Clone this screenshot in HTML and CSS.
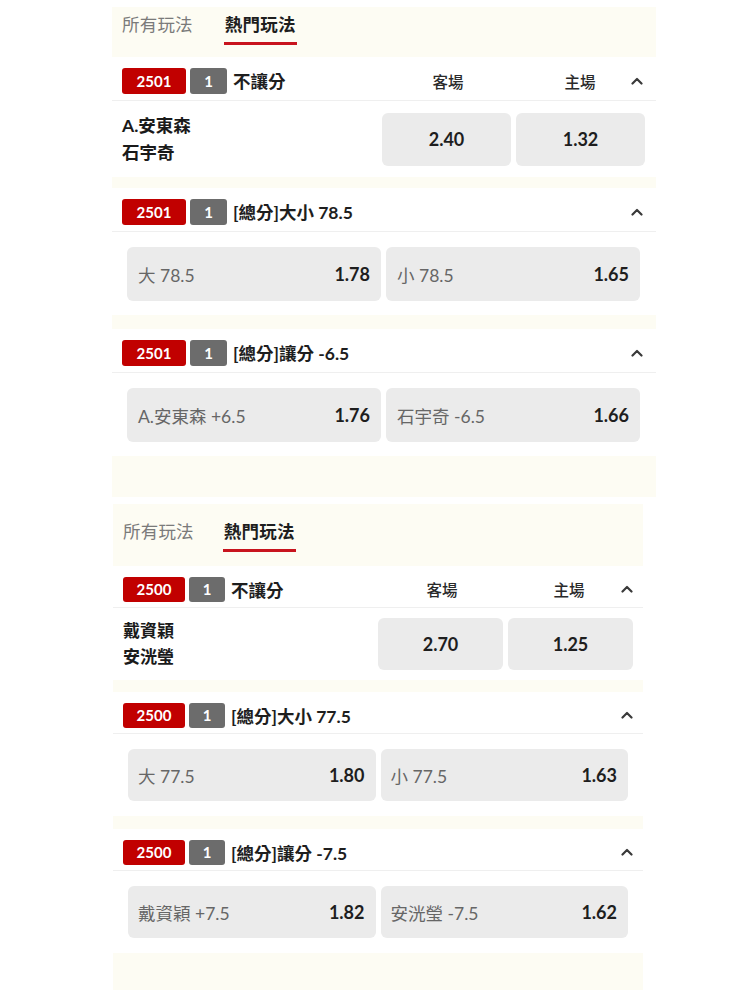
FILE: index.html
```html
<!DOCTYPE html>
<html lang="zh-Hant">
<head>
<meta charset="utf-8">
<title>熱門玩法</title>
<link rel="stylesheet" href="styles.css">
</head>
<body>
<div class="panel pa">
  <div class="tabs"><span class="tab">所有玩法</span><span class="tab active">熱門玩法</span></div>

  <section class="market">
    <div class="mhead">
      <span class="bid">2501</span><span class="bnum">1</span><span class="mtitle">不讓分</span>
      <span class="col c1">客場</span><span class="col c2">主場</span>
      <svg class="caret" viewBox="0 0 12 8" width="12" height="8"><polyline points="1.5,6.5 6,2 10.5,6.5"/></svg>
    </div>
    <div class="mbody teams-body">
      <div class="teams"><div>A.安東森</div><div>石宇奇</div></div>
      <div class="odd solo">2.40</div>
      <div class="odd solo">1.32</div>
    </div>
  </section>
  <div class="gap g1"></div>

  <section class="market">
    <div class="mhead">
      <span class="bid">2501</span><span class="bnum">1</span><span class="mtitle">[總分]大小 78.5</span>
      <svg class="caret" viewBox="0 0 12 8" width="12" height="8"><polyline points="1.5,6.5 6,2 10.5,6.5"/></svg>
    </div>
    <div class="mbody pair-body">
      <div class="odd pair"><span class="lbl">大 78.5</span><span class="val">1.78</span></div>
      <div class="odd pair"><span class="lbl">小 78.5</span><span class="val">1.65</span></div>
    </div>
  </section>
  <div class="gap g2"></div>

  <section class="market">
    <div class="mhead">
      <span class="bid">2501</span><span class="bnum">1</span><span class="mtitle">[總分]讓分 -6.5</span>
      <svg class="caret" viewBox="0 0 12 8" width="12" height="8"><polyline points="1.5,6.5 6,2 10.5,6.5"/></svg>
    </div>
    <div class="mbody pair-body">
      <div class="odd pair"><span class="lbl">A.安東森 +6.5</span><span class="val">1.76</span></div>
      <div class="odd pair"><span class="lbl">石宇奇 -6.5</span><span class="val">1.66</span></div>
    </div>
  </section>
  <div class="foot"></div>
</div>

<div class="panel pb">
  <div class="tabs"><span class="tab">所有玩法</span><span class="tab active">熱門玩法</span></div>

  <section class="market">
    <div class="mhead">
      <span class="bid">2500</span><span class="bnum">1</span><span class="mtitle">不讓分</span>
      <span class="col c1">客場</span><span class="col c2">主場</span>
      <svg class="caret" viewBox="0 0 12 8" width="12" height="8"><polyline points="1.5,6.5 6,2 10.5,6.5"/></svg>
    </div>
    <div class="mbody teams-body">
      <div class="teams"><div>戴資穎</div><div>安洸瑩</div></div>
      <div class="odd solo">2.70</div>
      <div class="odd solo">1.25</div>
    </div>
  </section>
  <div class="gap g1"></div>

  <section class="market">
    <div class="mhead">
      <span class="bid">2500</span><span class="bnum">1</span><span class="mtitle">[總分]大小 77.5</span>
      <svg class="caret" viewBox="0 0 12 8" width="12" height="8"><polyline points="1.5,6.5 6,2 10.5,6.5"/></svg>
    </div>
    <div class="mbody pair-body">
      <div class="odd pair"><span class="lbl">大 77.5</span><span class="val">1.80</span></div>
      <div class="odd pair"><span class="lbl">小 77.5</span><span class="val">1.63</span></div>
    </div>
  </section>
  <div class="gap g2"></div>

  <section class="market">
    <div class="mhead">
      <span class="bid">2500</span><span class="bnum">1</span><span class="mtitle">[總分]讓分 -7.5</span>
      <svg class="caret" viewBox="0 0 12 8" width="12" height="8"><polyline points="1.5,6.5 6,2 10.5,6.5"/></svg>
    </div>
    <div class="mbody pair-body">
      <div class="odd pair"><span class="lbl">戴資穎 +7.5</span><span class="val">1.82</span></div>
      <div class="odd pair"><span class="lbl">安洸瑩 -7.5</span><span class="val">1.62</span></div>
    </div>
  </section>
  <div class="foot"></div>
</div>
</body>
</html>
```

FILE: styles.css
```css
html, body {
  margin: 0;
  padding: 0;
  background: #ffffff;
}
body {
  font-family: "Lato", "Noto Sans CJK TC", "Noto Sans", sans-serif;
  color: #222222;
  font-size: 17px;
}

.panel {
  background: #fdfcf3;
  box-sizing: border-box;
}
.pa {
  margin: 7px 0 0 112px;
  width: 544px;
}
.pb {
  margin: 7px 0 0 113px;
  width: 530px;
}

/* tabs */
.tabs {
  display: flex;
  align-items: flex-start;
}
.pa .tabs {
  padding: 6px 0 12px 9px;
  gap: 30px;
}
.pb .tabs {
  padding: 16px 0 14px 9px;
  gap: 28px;
}
.tab {
  font-size: 17.5px;
  line-height: 24px;
  padding: 0 1px 5px;
  border-bottom: 3px solid transparent;
  color: #7a7a7a;
  letter-spacing: 0.2px;
}
.tab.active {
  color: #1e1e1e;
  font-weight: 700;
  border-bottom-color: #c8141e;
}

/* markets */
.market {
  background: #ffffff;
}
.mhead {
  display: flex;
  align-items: center;
  box-sizing: border-box;
  border-bottom: 1px solid #efefef;
}
.pa .mhead {
  height: 44px;
  padding: 4px 12px 0 10px;
}
.pb .mhead {
  height: 42px;
  padding: 5px 9px 0 10px;
}
.bid, .bnum {
  display: flex;
  align-items: center;
  justify-content: center;
  color: #ffffff;
  font-size: 15px;
  font-weight: 700;
  border-radius: 3px;
  height: 26px;
}
.bid {
  background: #c10000;
  width: 64px;
}
.bnum {
  background: #6c6c6c;
  width: 37px;
  margin-left: 4px;
}
.pb .bid { width: 62px; height: 25px; }
.pb .bnum { width: 36px; height: 25px; }
.mtitle {
  flex: 1;
  margin-left: 6px;
  font-size: 17.5px;
  font-weight: 700;
  color: #1e1e1e;
  white-space: nowrap;
}
.col {
  width: 80px;
  text-align: center;
  font-size: 15.5px;
  font-weight: 500;
  color: #2a2a2a;
}
.pa .c1 { margin-right: 52px; }
.pa .c2 { margin-right: 10px; }
.pb .c1 { margin-right: 47px; }
.pb .c2 { margin-right: 11px; }
.caret {
  width: 14px;
  height: 8px;
  fill: none;
  stroke: #3a3a3a;
  stroke-width: 2.2;
  stroke-linecap: round;
  stroke-linejoin: round;
}

.mbody {
  display: flex;
  align-items: center;
  gap: 5px;
}
.pa .teams-body { padding: 11px 11px 11px 10px; }
.pb .teams-body { padding: 10px 10px 10px 10px; }
.teams {
  flex: 1;
  font-size: 17.5px;
  font-weight: 700;
  line-height: 27px;
  color: #1a1a1a;
}
.pb .teams { line-height: 26px; font-size: 17px; }

.odd {
  background: #ebebeb;
  border-radius: 6px;
  box-sizing: border-box;
  display: flex;
  align-items: center;
}
.odd.solo {
  justify-content: center;
  font-weight: 700;
  font-size: 18px;
  color: #1e1e1e;
}
.pa .odd.solo { width: 129px; height: 53px; }
.pb .odd.solo { width: 125px; height: 52px; }

.pa .pair-body { padding: 15px 16px 14px 15px; }
.pb .pair-body { padding: 15px 15px 15px 15px; }
.odd.pair {
  flex: 1;
  justify-content: space-between;
  padding: 0 11px;
}
.pa .odd.pair { height: 54px; }
.pb .odd.pair { height: 52px; padding-left: 10px; }
.lbl {
  color: #666666;
  font-size: 17.5px;
}
.val {
  font-weight: 700;
  font-size: 18px;
  color: #1e1e1e;
}

.gap.g1 { height: 11px; }
.gap.g2 { height: 14px; }
.pb .gap.g1 { height: 12px; }
.pb .gap.g2 { height: 13px; }
.pa .foot { height: 41px; }
.pb .foot { height: 37px; }
```
